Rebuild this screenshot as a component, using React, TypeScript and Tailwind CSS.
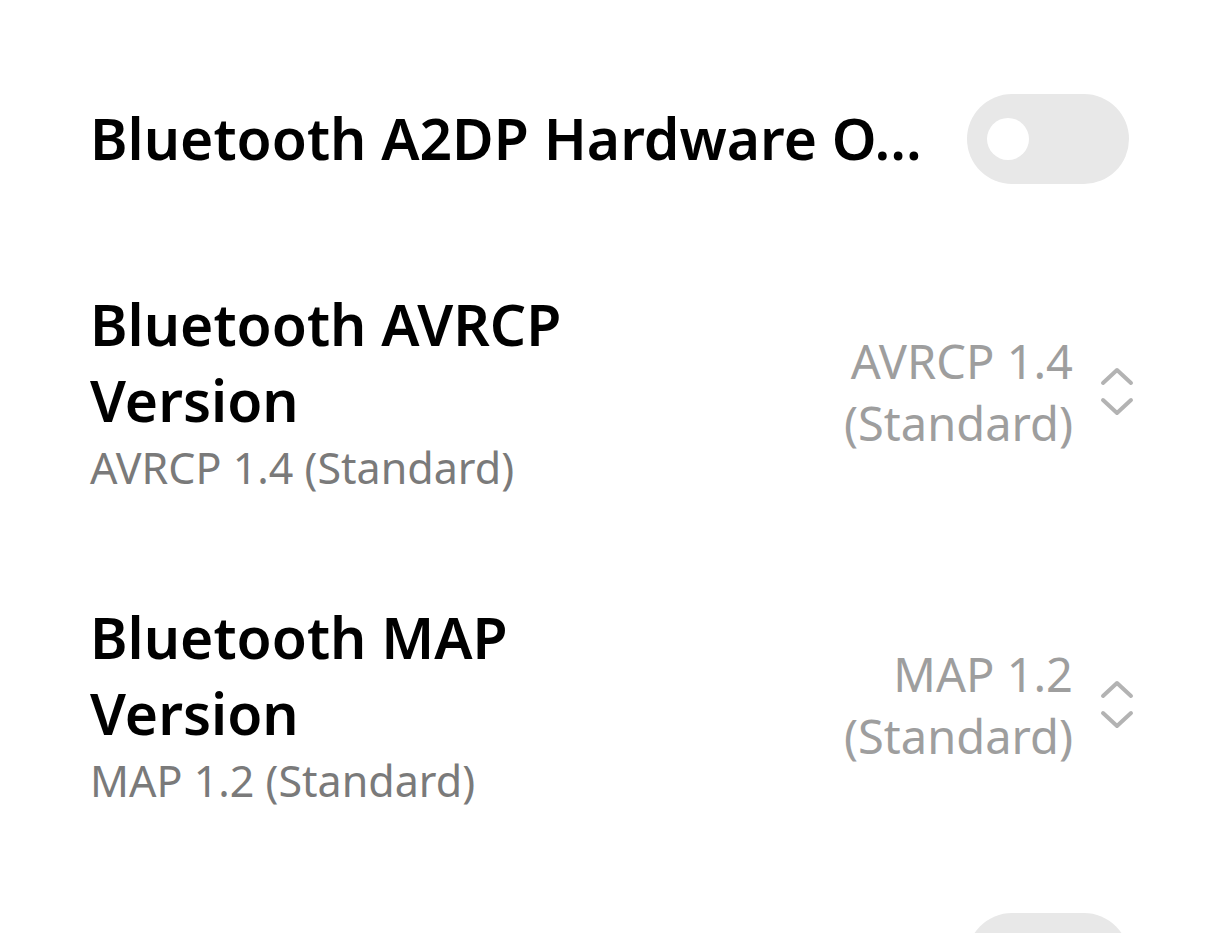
import React from "react";

const font = { fontFamily: "'Noto Sans', Roboto, sans-serif" };

function Chevrons() {
  return (
    <svg width="34" height="50" viewBox="0 0 34 50" className="shrink-0">
      <path d="M3 16 L17 3 L31 16" fill="none" stroke="#b3b3b3" strokeWidth="4" strokeLinecap="round" strokeLinejoin="round" />
      <path d="M3 33 L17 46 L31 33" fill="none" stroke="#b3b3b3" strokeWidth="4" strokeLinecap="round" strokeLinejoin="round" />
    </svg>
  );
}

function Toggle() {
  return (
    <div className="w-[162px] h-[90px] rounded-full bg-[#e8e8e8] flex items-center pl-[20px] shrink-0">
      <div className="w-[42px] h-[42px] rounded-full bg-white" />
    </div>
  );
}

function SelectRow({ title1, title2, sub, v1 }: { title1: string; title2: string; sub: string; v1: string }) {
  return (
    <div className="flex items-center justify-between">
      <div className="w-[600px]">
        <div className="text-[57px] leading-[76px] font-semibold text-black">
          {title1}
          <br />
          {title2}
        </div>
        <div className="text-[43px] leading-[60px] text-[#7a7a7a]">{sub}</div>
      </div>
      <div className="flex items-center">
        <div className="text-right text-[47px] leading-[62px] text-[#9e9e9e]">
          {v1}
          <br />
          (Standard)
        </div>
        <div className="ml-[27px]">
          <Chevrons />
        </div>
      </div>
    </div>
  );
}

export default function App() {
  return (
    <div className="w-[1220px] h-[933px] bg-white overflow-hidden pl-[90px] pr-[86px]" style={font}>
      <div className="mt-[94px] h-[90px] flex items-center justify-between pr-[5px]">
        <div className="flex-1 min-w-0 whitespace-nowrap text-[57px] font-semibold text-black">
          Bluetooth A2DP Hardware O...
        </div>
        <Toggle />
      </div>
      <div className="mt-[102px]">
        <SelectRow title1="Bluetooth AVRCP" title2="Version" sub="AVRCP 1.4 (Standard)" v1="AVRCP 1.4" />
      </div>
      <div className="mt-[101px]">
        <SelectRow title1="Bluetooth MAP" title2="Version" sub="MAP 1.2 (Standard)" v1="MAP 1.2" />
      </div>
      <div className="mt-[102px] flex justify-end pr-[5px]">
        <Toggle />
      </div>
    </div>
  );
}
